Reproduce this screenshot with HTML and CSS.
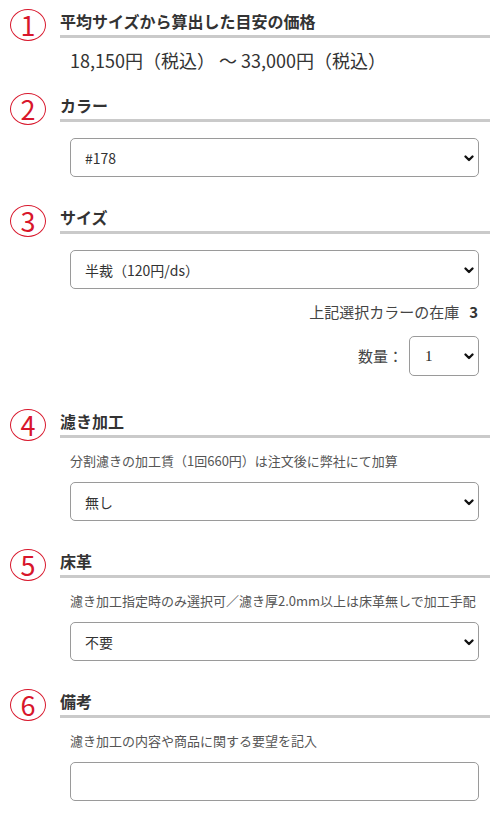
FILE: index.html
```html
<!DOCTYPE html>
<html lang="ja">
<head>
<meta charset="utf-8">
<title>注文フォーム</title>
<link rel="stylesheet" href="styles.css">
</head>
<body>
<div class="form">
  <section class="sec">
    <div class="sec-head"><span class="num">1</span><h2 class="sec-title">平均サイズから算出した目安の価格</h2></div>
    <div class="sec-body"><p class="price">18,150円（税込） 〜 33,000円（税込）</p></div>
  </section>

  <section class="sec sec-after-price">
    <div class="sec-head"><span class="num">2</span><h2 class="sec-title">カラー</h2></div>
    <div class="sec-body">
      <div class="field">
        <select class="sel"><option>#178</option></select>
        <svg class="chev" width="10" height="7" viewBox="0 0 10 7"><path d="M1.5 1.5 L5 5 L8.5 1.5" fill="none" stroke="#111" stroke-width="2.3" stroke-linecap="round" stroke-linejoin="round"/></svg>
      </div>
    </div>
  </section>

  <section class="sec">
    <div class="sec-head"><span class="num">3</span><h2 class="sec-title">サイズ</h2></div>
    <div class="sec-body">
      <div class="field">
        <select class="sel"><option>半裁（120円/ds）</option></select>
        <svg class="chev" width="10" height="7" viewBox="0 0 10 7"><path d="M1.5 1.5 L5 5 L8.5 1.5" fill="none" stroke="#111" stroke-width="2.3" stroke-linecap="round" stroke-linejoin="round"/></svg>
      </div>
      <p class="stock">上記選択カラーの在庫<b>3</b></p>
      <div class="qty">
        <span class="qty-label">数量：</span>
        <div class="field qty-field">
          <select class="sel sel-qty"><option>1</option></select>
          <svg class="chev" width="10" height="7" viewBox="0 0 10 7"><path d="M1.5 1.5 L5 5 L8.5 1.5" fill="none" stroke="#111" stroke-width="2.3" stroke-linecap="round" stroke-linejoin="round"/></svg>
        </div>
      </div>
    </div>
  </section>

  <section class="sec sec-after-qty">
    <div class="sec-head"><span class="num">4</span><h2 class="sec-title">濾き加工</h2></div>
    <div class="sec-body">
      <p class="note">分割濾きの加工賃（1回660円）は注文後に弊社にて加算</p>
      <div class="field field-after-note">
        <select class="sel"><option>無し</option></select>
        <svg class="chev" width="10" height="7" viewBox="0 0 10 7"><path d="M1.5 1.5 L5 5 L8.5 1.5" fill="none" stroke="#111" stroke-width="2.3" stroke-linecap="round" stroke-linejoin="round"/></svg>
      </div>
    </div>
  </section>

  <section class="sec">
    <div class="sec-head"><span class="num">5</span><h2 class="sec-title">床革</h2></div>
    <div class="sec-body">
      <p class="note">濾き加工指定時のみ選択可／濾き厚2.0mm以上は床革無しで加工手配</p>
      <div class="field field-after-note">
        <select class="sel"><option>不要</option></select>
        <svg class="chev" width="10" height="7" viewBox="0 0 10 7"><path d="M1.5 1.5 L5 5 L8.5 1.5" fill="none" stroke="#111" stroke-width="2.3" stroke-linecap="round" stroke-linejoin="round"/></svg>
      </div>
    </div>
  </section>

  <section class="sec">
    <div class="sec-head"><span class="num">6</span><h2 class="sec-title">備考</h2></div>
    <div class="sec-body">
      <p class="note">濾き加工の内容や商品に関する要望を記入</p>
      <div class="field field-after-note">
        <input class="text-input" type="text">
      </div>
    </div>
  </section>
</div>
</body>
</html>
```

FILE: styles.css
```css
html, body {
  margin: 0;
  padding: 0;
  background: #fff;
}

body {
  font-family: "Noto Sans CJK JP", "Noto Sans", sans-serif;
  color: #333;
}

.form {
  padding: 9px 9px 0 10px;
}

.sec + .sec {
  margin-top: 28px;
}

.sec.sec-after-price {
  margin-top: 21px;
}

.sec.sec-after-qty {
  margin-top: 33px;
}

.sec-head {
  display: flex;
  align-items: flex-start;
  height: 32px;
}

.num {
  flex: none;
  box-sizing: border-box;
  width: 36px;
  height: 32px;
  border: 1px solid #d8162b;
  border-radius: 50%;
  color: #d8162b;
  font-size: 27px;
  line-height: 30px;
  text-align: center;
}

.sec-title {
  flex: 1;
  margin: 0 0 0 14px;
  padding-bottom: 2px;
  border-bottom: 3px solid #cacaca;
  font-size: 16px;
  font-weight: 700;
  line-height: 24px;
  color: #333;
}

.sec-body {
  padding: 0 11px 0 60px;
}

.price {
  margin: 7px 0 0;
  font-size: 18px;
  line-height: 24px;
  color: #333;
}

.field {
  position: relative;
  margin-top: 13px;
}

.field-after-note {
  margin-top: 11px;
}

.sel,
.text-input {
  display: block;
  box-sizing: border-box;
  width: 100%;
  height: 39px;
  margin: 0;
  border: 1px solid #9a9a9a;
  border-radius: 5px;
  background: #fff;
  font-family: "Noto Sans CJK JP", "Noto Sans", sans-serif;
  font-size: 14px;
  color: #333;
}

.sel {
  appearance: none;
  -webkit-appearance: none;
  padding: 0 30px 0 14px;
}

.text-input {
  padding: 0 14px;
}

.chev {
  position: absolute;
  right: 5px;
  top: 50%;
  margin-top: -3px;
  pointer-events: none;
}

.stock {
  margin: 11px 0 0;
  text-align: right;
  font-size: 15px;
  line-height: 24px;
  color: #444;
}

.stock b {
  margin-left: 10px;
  margin-right: 1px;
  color: #333;
}

.qty {
  display: flex;
  justify-content: flex-end;
  align-items: center;
  margin-top: 12px;
}

.qty-label {
  font-size: 15px;
  line-height: 24px;
  color: #444;
  margin-right: 6px;
}

.qty-field {
  margin-top: 0;
  width: 70px;
}

.sel-qty {
  height: 40px;
  padding-left: 15px;
  font-family: "Liberation Serif", serif;
  font-size: 15px;
  color: #222;
}

.note {
  margin: 10px 0 0;
  font-size: 13px;
  line-height: 20px;
  color: #555;
}
```
